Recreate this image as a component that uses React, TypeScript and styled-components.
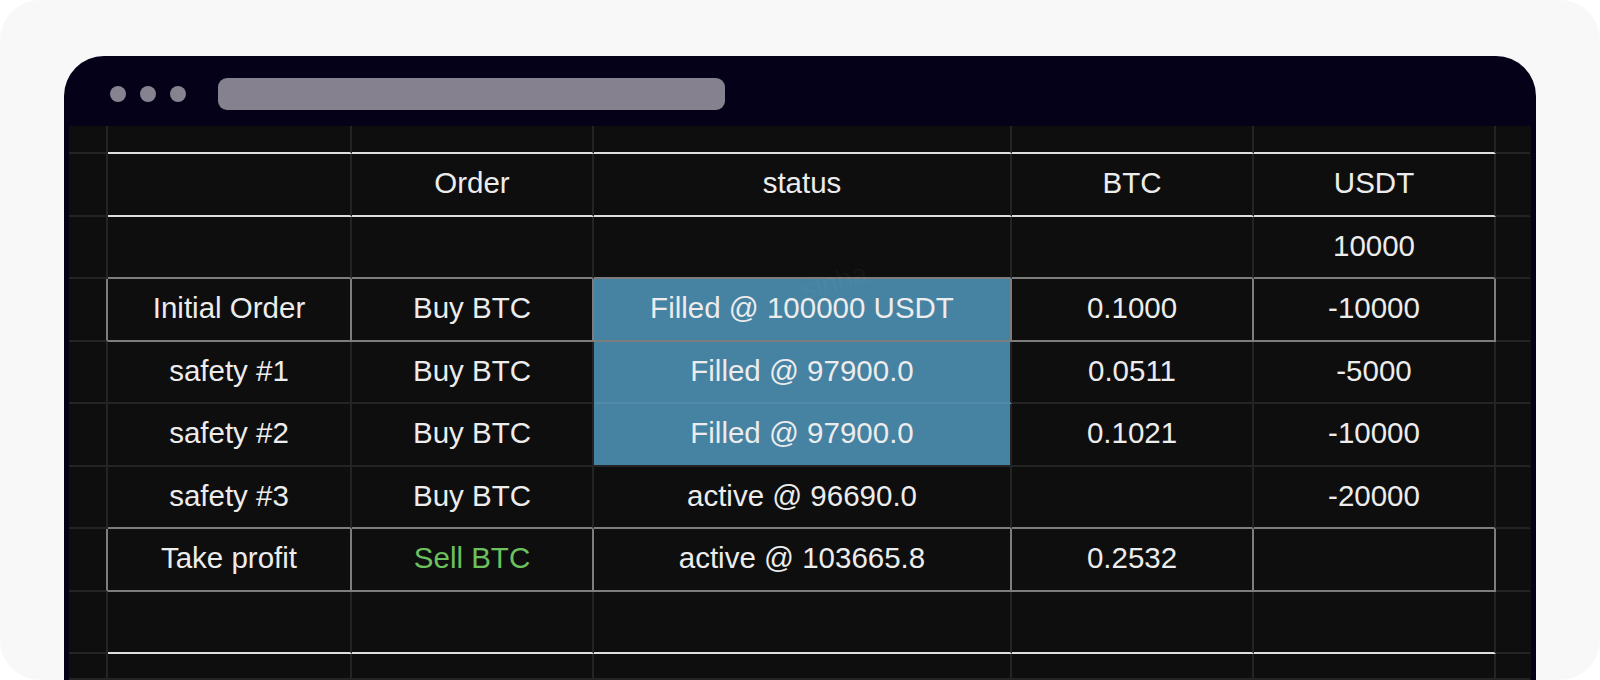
import React from "react";
import styled, { createGlobalStyle } from "styled-components";

const Global = createGlobalStyle`
  html, body { margin: 0; padding: 0; background: #ffffff; }
  body { font-family: "Liberation Sans", Arial, sans-serif; }
  *, *::before, *::after { box-sizing: border-box; }
`;

type Line = "grid" | "white" | "box" | "fillgrid" | "none";

const lineColor: Record<Line, string> = {
  grid: "#242424",
  white: "#dedede",
  box: "#7d7d7d",
  fillgrid: "#528aa8",
  none: "transparent",
};

const Page = styled.div`
  width: 1600px;
  height: 680px;
  background: #f8f8f8;
  border-radius: 40px;
  overflow: hidden;
  padding: 56px 64px 0;
`;

const Window = styled.div`
  height: 100%;
  background: #050118;
  border-radius: 40px 40px 0 0;
  display: flex;
  flex-direction: column;
  overflow: hidden;
`;

const TitleBar = styled.div`
  height: 70px;
  flex: none;
  display: flex;
  align-items: center;
  padding: 5px 0 0 46px;
`;

const Dots = styled.div`
  display: flex;
  gap: 14px;
`;

const Dot = styled.span`
  width: 16px;
  height: 16px;
  border-radius: 50%;
  background: #86828f;
`;

const AddressBar = styled.div`
  margin-left: 32px;
  width: 507px;
  height: 32px;
  border-radius: 9px;
  background: #85818e;
`;

const Sheet = styled.div`
  flex: 1;
  margin: 0 5px;
  background: #0e0e0e;
  display: grid;
  grid-template-columns: 39px 244px 242px 418px 242px 242px 35px;
  grid-template-rows: 28px repeat(8, 62.5px) 1fr;
  position: relative;
  overflow: hidden;
`;

const Cell = styled.div<{ $bottom: Line; $right: Line; $fill?: boolean; $green?: boolean }>`
  display: flex;
  align-items: center;
  justify-content: center;
  padding-bottom: 3px;
  border-right: 2px solid ${(p) => lineColor[p.$right]};
  border-bottom: 2px solid ${(p) => lineColor[p.$bottom]};
  background: ${(p) => (p.$fill ? "#4682a2" : "transparent")};
  color: ${(p) => (p.$green ? "#6cc05e" : "#ececec")};
  font-size: 29.5px;
  line-height: 1;
  white-space: nowrap;
`;

const Watermark = styled.span<{ $x: number; $y: number }>`
  position: absolute;
  left: ${(p) => p.$x}px;
  top: ${(p) => p.$y}px;
  font-size: 28px;
  color: rgba(255, 255, 255, 0.04);
  transform: rotate(-16deg);
  pointer-events: none;
  white-space: nowrap;
`;

type RowKind = "edgeTop" | "header" | "start" | "boxed" | "fillMid" | "fillEnd" | "beforeBox" | "beforeEnd" | "edgeBottom";

interface RowSpec {
  kind: RowKind;
  cells: string[];
  fill?: boolean;
  green?: boolean;
}

const rows: RowSpec[] = [
  { kind: "edgeTop", cells: ["", "", "", "", ""] },
  { kind: "header", cells: ["", "Order", "status", "BTC", "USDT"] },
  { kind: "start", cells: ["", "", "", "", "10000"] },
  { kind: "boxed", cells: ["Initial Order", "Buy BTC", "Filled @ 100000 USDT", "0.1000", "-10000"], fill: true },
  { kind: "fillMid", cells: ["safety #1", "Buy BTC", "Filled @ 97900.0", "0.0511", "-5000"], fill: true },
  { kind: "fillEnd", cells: ["safety #2", "Buy BTC", "Filled @ 97900.0", "0.1021", "-10000"], fill: true },
  { kind: "beforeBox", cells: ["safety #3", "Buy BTC", "active @ 96690.0", "", "-20000"] },
  { kind: "boxed", cells: ["Take profit", "Sell BTC", "active @ 103665.8", "0.2532", ""], green: true },
  { kind: "beforeEnd", cells: ["", "", "", "", ""] },
  { kind: "edgeBottom", cells: ["", "", "", "", ""] },
];

function bottomFor(kind: RowKind, col: number, fill: boolean): Line {
  if (col < 1 || col > 5) return "grid";
  switch (kind) {
    case "edgeTop":
    case "header":
    case "beforeEnd":
      return "white";
    case "start":
    case "beforeBox":
    case "boxed":
      return "box";
    case "fillMid":
      return fill ? "fillgrid" : "grid";
    default:
      return "grid";
  }
}

function rightFor(kind: RowKind, col: number): Line {
  if (col === 6) return "none";
  if (kind === "boxed" && col <= 5) return "box";
  return "grid";
}

export default function App() {
  return (
    <>
      <Global />
      <Page>
        <Window>
          <TitleBar>
            <Dots>
              <Dot />
              <Dot />
              <Dot />
            </Dots>
            <AddressBar />
          </TitleBar>
          <Sheet>
            {rows.map((row, r) =>
              ["", ...row.cells, ""].map((text, c) => {
                const fill = !!row.fill && c === 3;
                return (
                  <Cell
                    key={`${r}-${c}`}
                    $bottom={bottomFor(row.kind, c, fill)}
                    $right={rightFor(row.kind, c)}
                    $fill={fill}
                    $green={!!row.green && c === 2}
                  >
                    {text}
                  </Cell>
                );
              })
            )}
            <Watermark $x={732} $y={140}>sinha</Watermark>
          </Sheet>
        </Window>
      </Page>
    </>
  );
}
